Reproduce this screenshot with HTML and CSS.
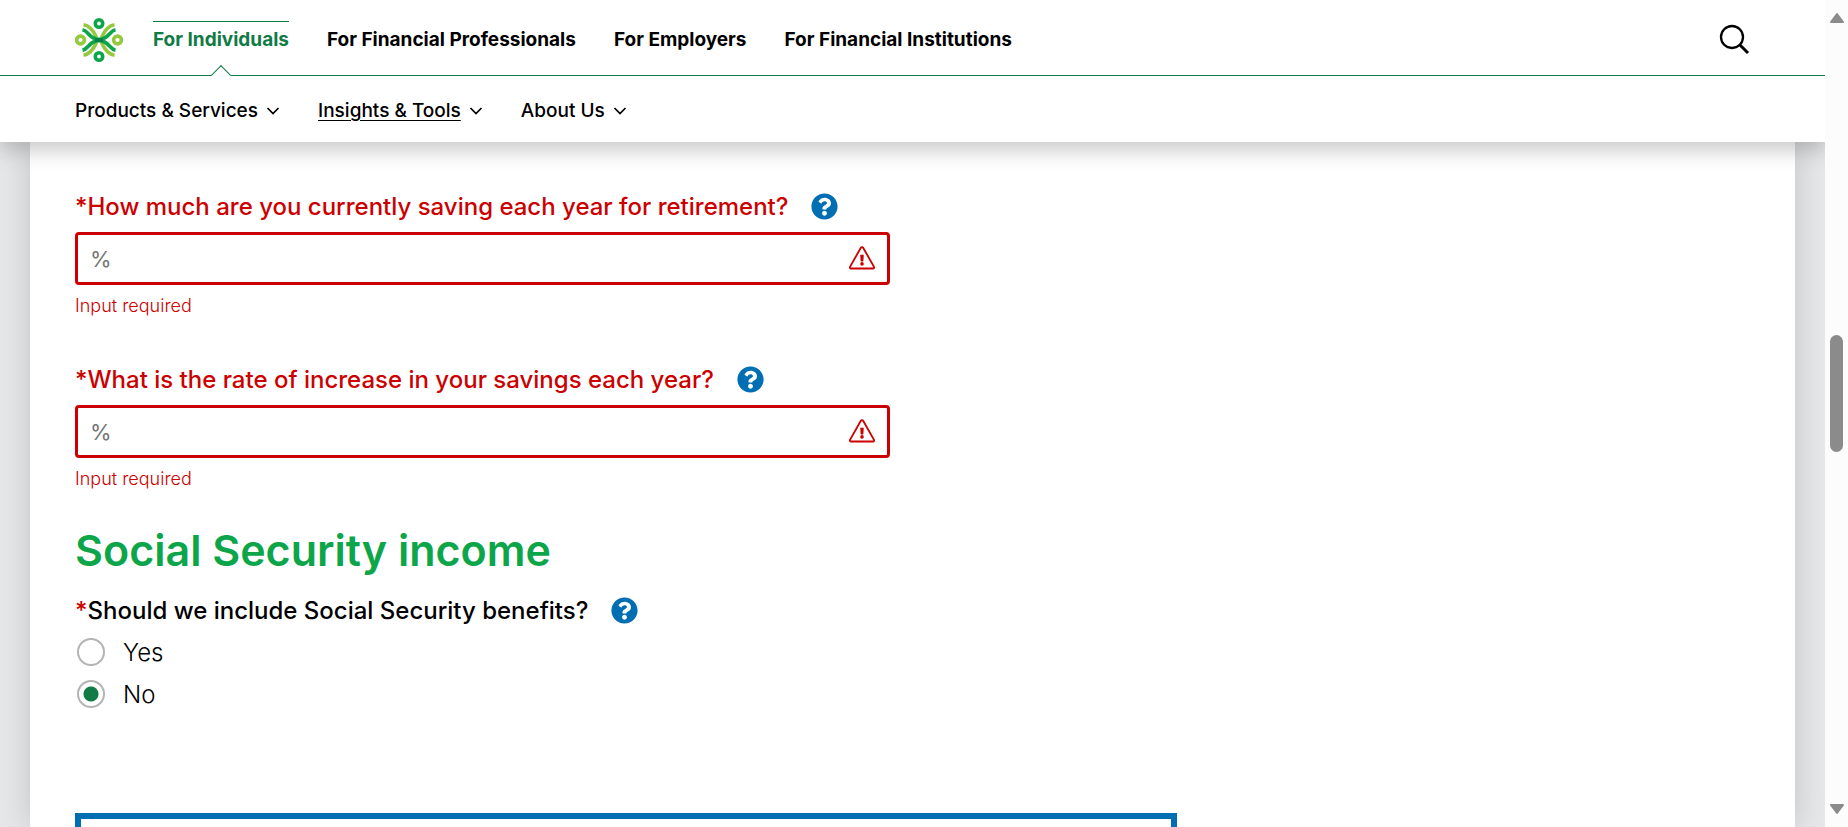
FILE: index.html
```html
<!DOCTYPE html>
<html lang="en">
<head>
<meta charset="utf-8">
<title>Retirement calculator</title>
<link rel="stylesheet" href="styles.css">
</head>
<body>
<svg class="defs" aria-hidden="true">
  <symbol id="chevron" viewBox="0 0 14 10"><path d="M1.500 2L7 7.500 12.500 2" fill="none" stroke="currentColor" stroke-width="1.7"/></symbol>
  <symbol id="help" viewBox="0 0 512 512"><path fill="currentColor" d="M504 256c0 137-111 248-248 248S8 393 8 256 119 8 256 8s248 111 248 248zM262.700 90c-54.500 0-89.300 23-116.500 63.800-3.500 5.300-2.400 12.400 2.700 16.300l34.700 26.300c5.200 3.900 12.600 3 16.700-2.100 17.900-22.700 30.100-35.800 57.300-35.800 20.400 0 45.700 13.100 45.700 33 0 15-12.400 22.700-32.500 34C247.100 238.500 216 254.900 216 296v4c0 6.600 5.400 12 12 12h56c6.600 0 12-5.400 12-12v-1.300c0-28.500 83.200-29.600 83.200-106.700 0-58-60.200-102-116.500-102zM256 338c-25.400 0-46 20.600-46 46s20.600 46 46 46 46-20.600 46-46-20.600-46-46-46z"/></symbol>
  <symbol id="alert" viewBox="0 0 28 26"><path d="M14 2.200Q14.800 2.200 15.300 3L26 21.800Q26.500 23.400 25 23.500H3Q1.500 23.400 2 21.800L12.700 3Q13.200 2.200 14 2.200z" fill="none" stroke="currentColor" stroke-width="1.8"/><path d="M12.200 9.800h3.600l-.5 6.700h-2.600z" fill="currentColor"/><circle cx="14" cy="18.900" r="1.800" fill="currentColor"/></symbol>
</svg>
<div class="window">
  <div class="viewport">
    <header class="header">
      <div class="primary">
        <a class="logo" href="#" aria-label="Home">
          <svg viewBox="0 0 48 46" width="48" height="46" fill="none">
            <g stroke="#95c93d" stroke-width="3.600">
              <circle cx="5.500" cy="23" r="3.900"/><circle cx="42.500" cy="23" r="3.900"/>
              <path d="M8.500 7.800Q16.500 9 21.500 20.500M39.500 7.800Q31.500 9 26.500 20.500M8.500 38.200Q16.500 37 21.500 25.500M39.500 38.200Q31.500 37 26.500 25.500"/>
            </g>
            <g stroke="#0ca54a" stroke-width="3.600"><circle cx="24" cy="6.500" r="3.700"/><circle cx="24" cy="39.500" r="3.700"/></g>
            <path stroke="#0ca54a" stroke-width="3.600" d="M7.500 12.800C14 14 14 22.400 24 22.400S34 14 40.500 12.800M7.500 33.200C14 32 14 23.600 24 23.600S34 32 40.500 33.200"/>
            <path fill="#08803f" d="M20 20.700q4 .8 8 0v4.600q-4-.8-8 0z"/>
          </svg>
        </a>
        <nav class="audiences" aria-label="Audience">
          <a class="audience current" href="#">For Individuals</a>
          <a class="audience" href="#">For Financial Professionals</a>
          <a class="audience" href="#">For Employers</a>
          <a class="audience" href="#">For Financial Institutions</a>
        </nav>
        <button class="search" type="button" aria-label="Search">
          <svg viewBox="0 0 32 32" width="32" height="32" fill="none" stroke="#000"><circle cx="14" cy="13" r="11" stroke-width="2.300"/><path d="M21.500 20.500l8.500 8.500" stroke-width="3"/></svg>
        </button>
      </div>
      <nav class="secondary" aria-label="Section">
        <a class="section" href="#"><span>Products &amp; Services</span><svg class="chevron"><use href="#chevron"/></svg></a>
        <a class="section active" href="#"><span>Insights &amp; Tools</span><svg class="chevron"><use href="#chevron"/></svg></a>
        <a class="section" href="#"><span>About Us</span><svg class="chevron"><use href="#chevron"/></svg></a>
      </nav>
    </header>
    <main class="page">
      <form class="panel">
        <div class="fields">
          <div class="field">
            <div class="prompt error"><label for="saving">*How much are you currently saving each year for retirement?</label>
              <button class="help" type="button" aria-label="Help"><svg><use href="#help"/></svg></button></div>
            <div class="control"><input class="entry" id="saving" type="text" placeholder="%"><svg class="alert"><use href="#alert"/></svg></div>
            <p class="message">Input required</p>
          </div>
          <div class="field">
            <div class="prompt error"><label for="rate">*What is the rate of increase in your savings each year?</label>
              <button class="help" type="button" aria-label="Help"><svg><use href="#help"/></svg></button></div>
            <div class="control"><input class="entry" id="rate" type="text" placeholder="%"><svg class="alert"><use href="#alert"/></svg></div>
            <p class="message">Input required</p>
          </div>
        </div>
        <h2 class="title">Social Security income</h2>
        <div class="choices" role="radiogroup" aria-labelledby="benefits">
          <div class="prompt"><span id="benefits"><span class="star">*</span>Should we include Social Security benefits?</span>
            <button class="help" type="button" aria-label="Help"><svg><use href="#help"/></svg></button></div>
          <label class="choice"><input class="radio" type="radio" name="benefits"><span>Yes</span></label>
          <label class="choice"><input class="radio" type="radio" name="benefits" checked><span>No</span></label>
        </div>
        <div class="results"></div>
      </form>
    </main>
  </div>
  <div class="scrollbar" aria-hidden="true">
    <svg class="arrow" viewBox="0 0 16 12"><path d="M8 2L14 10H2z"/></svg>
    <div class="track"><div class="thumb"></div></div>
    <svg class="arrow" viewBox="0 0 16 12"><path d="M8 10L14 2H2z"/></svg>
  </div>
</div>
</body>
</html>
```
FILE: styles.css
```css
* { box-sizing: border-box; }
body { margin: 0; font-family: Inter, Lato, sans-serif; color: #000; }
a { color: inherit; text-decoration: none; }
button { padding: 0; border: 0; background: none; cursor: pointer; }
.defs { display: none; }
.window { display: grid; grid-template-columns: 1fr 23px; height: 100vh; overflow: hidden; }
.viewport { display: flex; flex-direction: column; min-width: 0; overflow: hidden; }

.header { position: relative; z-index: 1; background: #fff; box-shadow: 0 8px 20px rgba(0, 0, 0, .22); }
.primary { display: flex; align-items: center; height: 76px; padding: 0 75px; border-bottom: 1px solid #117b45; }
.logo { display: flex; margin-right: 30px; margin-top: 5px; }
.audiences { display: flex; align-items: center; gap: 38px; flex: 1; height: 75px; padding-top: 4px; }
.audience { font-size: 19px; line-height: 36px; font-weight: 700; }
.current { position: relative; color: #117b45; border-top: 1px solid #117b45; }
.current::after { content: ""; position: absolute; left: 45%; bottom: -24px; width: 13px; height: 13px; border: solid #117b45; border-width: 1px 0 0 1px; background: #fff; transform: rotate(45deg); }
.search { display: flex; margin-top: 5px; }
.secondary { display: flex; align-items: center; gap: 38px; height: 66px; padding: 3px 75px 0; }
.section { display: flex; align-items: center; gap: 8px; font-size: 19px; line-height: 24px; font-weight: 500; }
.active span { text-decoration: underline; text-decoration-thickness: 1px; text-underline-offset: 3px; }
.chevron { width: 14px; height: 10px; }

.page { flex: 1; display: flex; min-height: 0; padding: 0 30px; background: #e6e7e9; }
.panel { flex: 1; padding: 48px 45px 0; background: #fff; box-shadow: 0 0 30px rgba(0, 0, 0, .16); }
.fields { display: grid; gap: 43px; max-width: 815px; margin-bottom: 29px; }
.prompt { display: flex; align-items: center; gap: 23px; font-size: 24px; line-height: 34px; font-weight: 500; }
.error, .message, .star { color: #c00; }
.help { display: flex; padding-bottom: 2px; color: #006eb3; }
.help svg { width: 27px; height: 27px; }
.control { position: relative; margin-top: 8px; }
.entry { display: block; width: 100%; height: 53px; padding: 0 50px 0 12px; border: 3px solid #c00; border-radius: 4px; font: 400 22px Inter, sans-serif; }
.entry::placeholder { color: #757575; }
.alert { position: absolute; right: 14px; top: 13px; width: 28px; height: 26px; color: #c00; }
.message { margin: 6px 0 0; font-size: 18px; line-height: 29px; font-weight: 300; }
.title { margin: 0 0 16px; font-size: 43px; line-height: 56px; font-weight: 600; color: #0ca54a; }
.choices { display: grid; margin-bottom: 98px; }
.choices .prompt { margin-bottom: 3px; }
.choice { display: flex; align-items: center; gap: 18px; width: max-content; height: 42px; padding-left: 2px; font-size: 24px; font-weight: 300; }
.radio { appearance: none; width: 28px; height: 28px; margin: 0; border: 2px solid #b4b4b4; border-radius: 50%; }
.radio:checked { background: radial-gradient(circle, #117b45 7px, #fff 8px); }
.results { max-width: 1102px; height: 200px; border: 6px solid #006eb3; }

.scrollbar { display: flex; flex-direction: column; align-items: center; padding: 11px 0; background: #fcfcfc; }
.arrow { width: 16px; height: 14px; fill: #8b8b8b; stroke: #8b8b8b; stroke-width: 2; stroke-linejoin: round; }
.track { flex: 1; width: 13px; padding-top: 310px; }
.thumb { height: 117px; border-radius: 7px; background: #8b8b8b; }
```
